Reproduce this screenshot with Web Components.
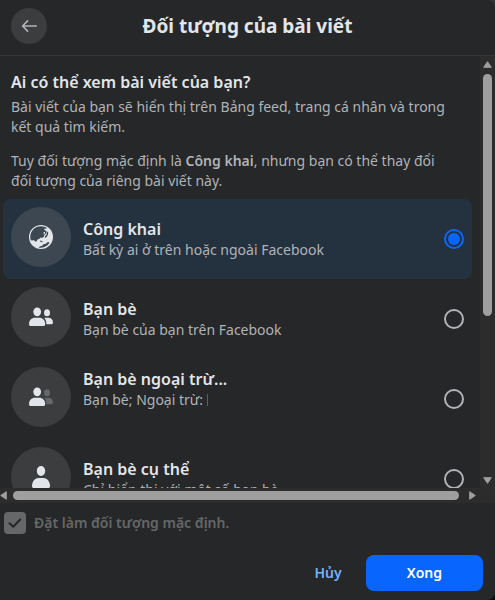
<!DOCTYPE html>
<html lang="vi">
<head>
<meta charset="utf-8">
<meta name="viewport" content="width=device-width, initial-scale=1">
<title>Đối tượng của bài viết</title>
<style>
  :root {
    --surface: #252728;
    --track: #2c2c2c;
    --thumb: #9f9f9f;
    --text: #e2e5e9;
    --muted: #b0b3b8;
    --accent: #0866ff;
  }
  body {
    margin: 0;
    background: linear-gradient(#333435 50%, #0c0c0c 50%);
    color: var(--text);
    font: 14px/20px "Noto Sans", "Open Sans", sans-serif;
  }
</style>
</head>
<body>
<audience-dialog>
  <span slot="title">Đối tượng của bài viết</span>
  <audience-intro></audience-intro>
  <audience-option icon="globe" label="Công khai" selected>Bất kỳ ai ở trên hoặc ngoài Facebook</audience-option>
  <audience-option icon="friends" label="Bạn bè">Bạn bè của bạn trên Facebook</audience-option>
  <audience-option icon="except" label="Bạn bè ngoại trừ..." tall>Bạn bè; Ngoại trừ: <name-mark></name-mark></audience-option>
  <audience-option icon="person" label="Bạn bè cụ thể">Chỉ hiển thị với một số bạn bè</audience-option>
  <default-check slot="footer"></default-check>
  <dialog-button slot="footer-actions" kind="plain">Hủy</dialog-button>
  <dialog-button slot="footer-actions" kind="primary">Xong</dialog-button>
</audience-dialog>

<script>
const attach = (host, html) => {
  const template = document.createElement('template');
  template.innerHTML = html;
  host.attachShadow({ mode: 'open' }).append(template.content.cloneNode(true));
};

const ICONS = {
  back: `<svg viewBox="0 0 20 20" width="20" height="20" fill="none" stroke="#b0b3b8" stroke-width="1.7" stroke-linecap="round" stroke-linejoin="round"><path d="M8.6 4.9 3.6 10l5 5.1M3.8 10h13.4"/></svg>`,
  globe: `<svg viewBox="0 0 24 24" width="24" height="24"><circle cx="12" cy="12" r="12" fill="#e2e5e9"/><path fill="#3d4751" d="M1.300 12C1.300 6 6 1.300 12 1.300c2.400 0 4.400.7 6 1.900l-1.600.6-1.400-.4.8 1.800 1.800 1-.4 2.600-1.800.8-.4 1.800-1.800 1.600-1.400-.6-1 1.200-2.200.8-1.200 2-1.400.2-1-1.600-1.800.6-1.400-.4C1.500 14.200 1.300 13.100 1.300 12Z"/><path fill="#3d4751" d="M18 6.600l1.200.6-.2 2.600-1.800 2.600-1.400.4.2-1.600 1.600-1.800z"/><path fill="#e2e5e9" d="m14.400 7.400 1.400-.6.4 1.400-1.400 1z"/><path fill="#3d4751" d="M10.800 21.400l2.400-.6 1.200-1.600 2.400-.4 2-1.800 1.800.6c-1.800 3.200-5 5-8.600 5.100-.8 0-1.600-.1-2.400-.3zM11 15.600l2 .4.800 1.200-2.200-.2z"/></svg>`,
  friends: `<svg viewBox="0 0 24 24" width="24" height="24" fill="#e2e5e9"><ellipse cx="8.2" cy="6.8" rx="3.9" ry="4.4"/><path d="M0 19.2c0-4 2.600-6.400 6-6.400h4.200c3.400 0 6 2.400 6 6.400 0 1.200-.7 1.800-1.800 1.800H1.800C.7 21 0 20.400 0 19.200Z"/><ellipse cx="18" cy="7.8" rx="3" ry="3.5"/><path d="M15.8 12.8h3.4c2.8 0 4.8 2 4.8 4.8 0 1-.5 1.6-1.6 1.6h-5c0-2.6-.6-4.4-2-6.2Z"/></svg>`,
  person: `<svg viewBox="0 0 24 24" width="24" height="24" fill="#e2e5e9"><ellipse cx="12" cy="6" rx="4.2" ry="5"/><path d="M3 21.2C3 16.800 5.600 13 9.400 13h5.200c3.800 0 6.400 3.800 6.400 8.200 0 1.200-.7 1.800-1.900 1.800H4.900C3.700 23 3 22.400 3 21.200Z"/></svg>`,
};
ICONS.except = ICONS.friends.replace('<ellipse cx="18"', '<g fill="#656768"><ellipse cx="18"').replace('</svg>', '</g></svg>');

customElements.define('glyph-icon', class extends HTMLElement {
  connectedCallback() {
    if (this.shadowRoot) return;
    attach(this, `<style>:host{display:block;line-height:0}svg{display:block}</style>${ICONS[this.getAttribute('name')]}`);
  }
});

customElements.define('name-mark', class extends HTMLElement {
  connectedCallback() {
    if (this.shadowRoot) return;
    attach(this, `<style>:host{display:inline-block;width:1px;height:12px;background:#5c5e60;vertical-align:-1px}</style>`);
  }
});

customElements.define('scroll-rail', class extends HTMLElement {
  connectedCallback() {
    if (this.shadowRoot) return;
    attach(this, `<style>
      :host{display:flex;flex-direction:column;align-items:center;justify-content:space-between;background:var(--track);box-sizing:border-box;padding:5px 0 4px;gap:6px;min-height:0}
      :host([axis=x]){flex-direction:row;padding:0 4px 0 0;gap:6px;min-width:0}
      .space{flex:1;display:flex;flex-direction:inherit;align-self:stretch;align-items:center}
      .thumb{background:var(--thumb);border-radius:5px}
      :host([axis=y]) .thumb{width:9px;height:61%}
      :host([axis=x]) .thumb{height:9px;width:99%}
      svg{display:block;flex:none;fill:var(--thumb);stroke:var(--thumb);stroke-linejoin:round}
      :host([axis=x]) svg{width:7px;height:9px}
      :host([axis=y]) svg{width:9px;height:7px}
    </style>
    ${this.getAttribute('axis') === 'y'
      ? `<svg viewBox="0 0 9 7"><path d="M4.500.7 8.300 6.300H.7Z"/></svg><div class="space"><div class="thumb"></div></div><svg viewBox="0 0 9 7"><path d="M4.500 6.300 8.300.7H.7Z"/></svg>`
      : `<svg viewBox="0 0 7 9"><path d="M.7 4.500 6.300.7v7.600Z"/></svg><div class="space"><div class="thumb"></div></div><svg viewBox="0 0 7 9"><path d="M6.300 4.500.7.7v7.600Z"/></svg>`}`);
  }
});

customElements.define('audience-intro', class extends HTMLElement {
  connectedCallback() {
    if (this.shadowRoot) return;
    attach(this, `<style>
      :host{display:block;padding:15px 20px 8px 8px;color:var(--muted)}
      h2{margin:0 0 4px;font-size:16px;line-height:22px;font-weight:600;color:var(--text)}
      p{margin:0 0 14px}
      p:last-child{margin:0}
      b{font-weight:600}
    </style>
    <h2>Ai có thể xem bài viết của bạn?</h2>
    <p>Bài viết của bạn sẽ hiển thị trên Bảng feed, trang cá nhân và trong kết quả tìm kiếm.</p>
    <p>Tuy đối tượng mặc định là <b>Công khai</b>, nhưng bạn có thể thay đổi đối tượng của riêng bài viết này.</p>`);
  }
});

customElements.define('audience-option', class extends HTMLElement {
  connectedCallback() {
    if (this.shadowRoot) return;
    attach(this, `<style>
      :host{display:block}
      label{display:flex;align-items:center;gap:12px;height:80px;box-sizing:border-box;padding:0 8px;border-radius:8px;cursor:pointer}
      :host([selected]) label{background:#243240}
      .disc{width:60px;height:60px;flex:none;align-self:flex-start;margin-top:8px;border-radius:50%;background:#3b3d3e;display:grid;place-items:center}
      :host([selected]) .disc{background:#3d4751}
      .copy{flex:1;min-width:0;display:flex;flex-direction:column}
      strong{font-size:16px;line-height:22px;font-weight:600}
      .note{color:var(--muted);line-height:20px}
      :host([tall]) .note{min-height:40px}
      input{appearance:none;flex:none;width:20px;height:20px;margin:0;border:2px solid var(--muted);border-radius:50%;box-sizing:border-box;display:grid;place-items:center}
      input:checked{border-color:var(--accent)}
      input:checked::before{content:"";width:12px;height:12px;border-radius:50%;background:var(--accent)}
    </style>
    <label>
      <span class="disc"><glyph-icon name="${this.getAttribute('icon')}"></glyph-icon></span>
      <span class="copy"><strong>${this.getAttribute('label')}</strong><span class="note"><slot></slot></span></span>
      <input type="radio" name="audience" ${this.hasAttribute('selected') ? 'checked' : ''}>
    </label>`);
    this.shadowRoot.querySelector('input').addEventListener('change', () => {
      for (const option of document.querySelectorAll('audience-option')) {
        option.toggleAttribute('selected', option === this);
        option.shadowRoot.querySelector('input').checked = option === this;
      }
    });
  }
});

customElements.define('default-check', class extends HTMLElement {
  connectedCallback() {
    if (this.shadowRoot) return;
    attach(this, `<style>
      :host{display:block;color:#656768}
      label{display:flex;width:fit-content;align-items:center;gap:8px;font-weight:600}
      .box{display:grid;width:22px;height:22px}
      .box>*{grid-area:1/1;margin:0}
      input{appearance:none;background:#656768;border-radius:4px}
      svg{pointer-events:none;z-index:1}
    </style>
    <label><span class="box"><input type="checkbox" checked disabled><svg viewBox="0 0 22 22" width="22" height="22" fill="none" stroke="#252728" stroke-width="2" stroke-linecap="round" stroke-linejoin="round"><path d="m5.500 11.200 3.700 3.500 7-7.200"/></svg></span>Đặt làm đối tượng mặc định.</label>`);
  }
});

customElements.define('dialog-button', class extends HTMLElement {
  connectedCallback() {
    if (this.shadowRoot) return;
    attach(this, `<style>
      :host{display:block}
      button{font:inherit;font-weight:600;height:36px;border:0;border-radius:8px;padding:0 12px;background:none;color:#75b1ff;cursor:pointer}
      :host([kind=primary]) button{padding:0 41px;background:var(--accent);color:#fff}
    </style><button type="button"><slot></slot></button>`);
  }
});

customElements.define('audience-dialog', class extends HTMLElement {
  connectedCallback() {
    if (this.shadowRoot) return;
    attach(this, `<style>
      :host{display:flex;flex-direction:column;height:100vh;background:var(--surface);border-radius:0 8px 8px 0;overflow:hidden}
      header{display:grid;grid-template-columns:36px 1fr 36px;align-items:center;padding:8px 11px 11px;border-bottom:1px solid #353637}
      header button{width:36px;height:36px;padding:0;border:0;border-radius:50%;background:#3b3d3e;display:grid;place-items:center;cursor:pointer}
      h1{margin:0;font-size:19px;line-height:24px;font-weight:700;text-align:center}
      .body{flex:1;min-height:0;display:grid;grid-template:minmax(0,1fr) 15px/minmax(0,1fr) 15px}
      .list{overflow:hidden;padding:0 8px 0 3px}
      .corner{background:var(--track)}
      footer{padding:9px 12px 9px 4px;display:flex;flex-direction:column;gap:21px}
      .actions{display:flex;justify-content:flex-end;gap:12px}
    </style>
    <header>
      <button type="button" aria-label="Quay lại"><glyph-icon name="back"></glyph-icon></button>
      <h1><slot name="title"></slot></h1>
    </header>
    <div class="body">
      <div class="list"><slot></slot></div>
      <scroll-rail axis="y"></scroll-rail>
      <scroll-rail axis="x"></scroll-rail>
      <div class="corner"></div>
    </div>
    <footer>
      <slot name="footer"></slot>
      <div class="actions"><slot name="footer-actions"></slot></div>
    </footer>`);
  }
});
</script>
</body>
</html>
